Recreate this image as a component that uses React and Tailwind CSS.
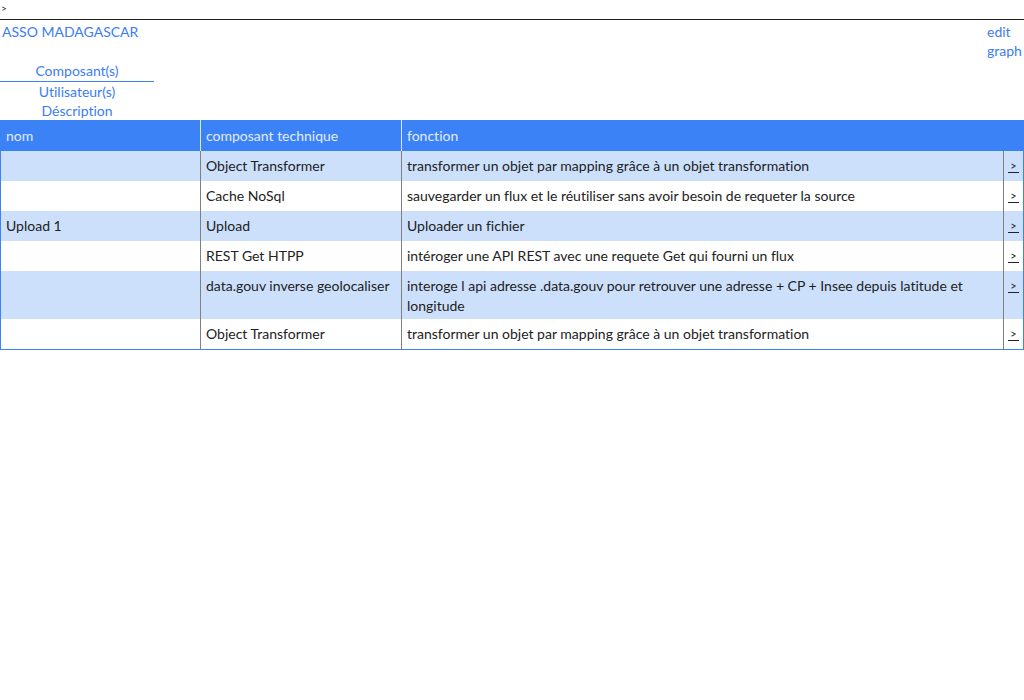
import React from "react";

const rows = [
  { nom: "", composant: "Object Transformer", fonction: "transformer un objet par mapping grâce à un objet transformation" },
  { nom: "", composant: "Cache NoSql", fonction: "sauvegarder un flux et le réutiliser sans avoir besoin de requeter la source" },
  { nom: "Upload 1", composant: "Upload", fonction: "Uploader un fichier" },
  { nom: "", composant: "REST Get HTPP", fonction: "intéroger une API REST avec une requete Get qui fourni un flux" },
  { nom: "", composant: "data.gouv inverse geolocaliser", fonction: "interoge l api adresse .data.gouv pour retrouver une adresse + CP + Insee depuis latitude et longitude" },
  { nom: "", composant: "Object Transformer", fonction: "transformer un objet par mapping grâce à un objet transformation" },
];

export default function App() {
  return (
    <div
      className="w-[1024px] min-h-[700px] bg-white text-[14px] text-[#222] [font-variant-ligatures:none]"
      style={{ fontFamily: "Lato, 'Noto Sans', sans-serif" }}
    >
      {/* barre du haut */}
      <div className="h-[20px] border-b border-[#222] text-[10px] leading-[16px] pl-[1px]">&gt;</div>

      <div className="flex justify-between text-[#3b7cf6]">
        <div className="pl-[2px] pt-[2px] leading-[20px]">ASSO MADAGASCAR</div>
        <div className="w-[37px] pt-[2px] leading-[19px]">
          <div>edit</div>
          <div>graph</div>
        </div>
      </div>

      {/* onglets */}
      <div className="w-[154px] text-center text-[#3b7cf6] leading-[19.5px] mt-[1px]">
        <div className="border-b border-[#3b82f6] pt-[1px] leading-[18.5px]">Composant(s)</div>
        <div>Utilisateur(s)</div>
        <div>Déscription</div>
      </div>

      <table className="w-full border-collapse border border-[#3b82f6] mt-[-1px]">
        <thead>
          <tr className="bg-[#3b82f6] text-[#e3ecff] text-left h-[31px]">
            <th className="font-normal px-[5px] w-[200px] border-r border-[#dbe7ff]">nom</th>
            <th className="font-normal px-[5px] w-[201px] border-r border-[#dbe7ff]">composant technique</th>
            <th className="font-normal px-[5px]">fonction</th>
            <th className="font-normal w-[20px]"></th>
          </tr>
        </thead>
        <tbody>
          {rows.map((r, i) => (
            <tr key={i} className={i % 2 === 0 ? "bg-[#cce0fc]" : "bg-white"}>
              <td className="px-[5px] py-[5px] leading-[20px] border-r border-[#808080] align-top">{r.nom}</td>
              <td className="px-[5px] py-[5px] leading-[20px] border-r border-[#808080] align-top">{r.composant}</td>
              <td className="px-[5px] pt-[5px] pb-[3px] leading-[20px] border-r border-[#808080] align-top">{r.fonction}</td>
              <td className="text-center align-top pt-[8px] leading-[12px]">
                <span className="inline-block border-b border-[#222] px-[2px] text-[11px] pt-[1px]">&gt;</span>
              </td>
            </tr>
          ))}
        </tbody>
      </table>
    </div>
  );
}
